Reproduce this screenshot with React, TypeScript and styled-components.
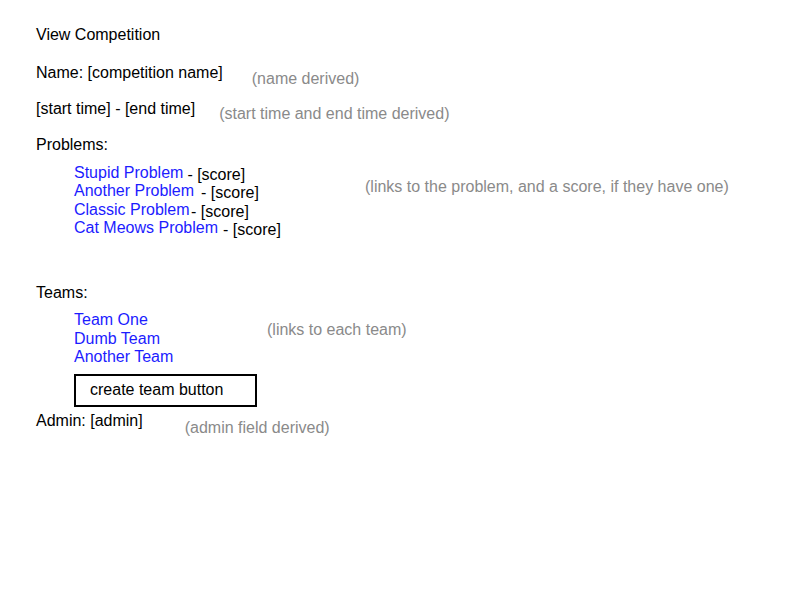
import styled, { createGlobalStyle } from "styled-components";

const problems = [
  { name: "Stupid Problem", gap: 4 },
  { name: "Another Problem", gap: 7 },
  { name: "Classic Problem", gap: 1.5 },
  { name: "Cat Meows Problem", gap: 5 },
];

const teams = ["Team One", "Dumb Team", "Another Team"];

export default function App() {
  return (
    <>
      <GlobalStyle />
      <Page>
        <Line>View Competition</Line>

        <Row $top={20}>
          <Line>Name: [competition name]</Line>
          <Note $left={29} $drop={6}>(name derived)</Note>
        </Row>

        <Row $top={18}>
          <Line>[start time] - [end time]</Line>
          <Note $left={24} $drop={5}>(start time and end time derived)</Note>
        </Row>

        <Row $top={18}>
          <Line>Problems:</Line>
        </Row>

        <Block $top={10}>
          <List $width={291}>
            {problems.map((p) => (
              <Item key={p.name} $step={18.33}>
                <Link href="#">{p.name}</Link>
                <Score $gap={p.gap}>- [score]</Score>
              </Item>
            ))}
          </List>
          <Note $left={0} $drop={14}>
            (links to the problem, and a score, if they have one)
          </Note>
        </Block>

        <Row $top={47}>
          <Line>Teams:</Line>
        </Row>

        <Block $top={9}>
          <List $width={193}>
            {teams.map((t) => (
              <Item key={t} $step={18.5}>
                <Link href="#">{t}</Link>
              </Item>
            ))}
          </List>
          <Note $left={0} $drop={10}>(links to each team)</Note>
        </Block>

        <Block $top={7}>
          <CreateButton>create team button</CreateButton>
        </Block>

        <Row $top={5}>
          <Line>Admin: [admin]</Line>
          <Note $left={42} $drop={7}>(admin field derived)</Note>
        </Row>
      </Page>
    </>
  );
}

const GlobalStyle = createGlobalStyle`
  html, body {
    margin: 0;
    padding: 0;
    background: #ffffff;
  }
  body {
    font-family: "Liberation Sans", Arial, sans-serif;
    color: #000000;
  }
`;

const Page = styled.div`
  width: 800px;
  height: 600px;
  box-sizing: border-box;
  padding: 26px 0 0 36px;
  display: flex;
  flex-direction: column;
  align-items: flex-start;
`;

const Line = styled.div`
  font-size: 16px;
  line-height: 18px;
  white-space: nowrap;
`;

const Row = styled.div<{ $top: number }>`
  display: flex;
  align-items: flex-start;
  height: 18px;
  margin-top: ${(p) => p.$top}px;
`;

const Note = styled.div<{ $left: number; $drop: number }>`
  font-size: 16px;
  line-height: 18px;
  color: #8a8a8a;
  white-space: nowrap;
  margin-left: ${(p) => p.$left}px;
  margin-top: ${(p) => p.$drop}px;
`;

const Block = styled.div<{ $top: number }>`
  display: flex;
  align-items: flex-start;
  margin: ${(p) => p.$top}px 0 0 38px;
`;

const List = styled.div<{ $width: number }>`
  width: ${(p) => p.$width}px;
  display: flex;
  flex-direction: column;
  font-size: 16px;
  line-height: 18px;
`;

const Item = styled.div<{ $step: number }>`
  display: flex;
  align-items: flex-start;
  height: ${(p) => p.$step}px;
  white-space: nowrap;
`;

const Link = styled.a`
  color: #1c1cff;
  text-decoration: none;
`;

const Score = styled.span<{ $gap: number }>`
  margin-left: ${(p) => p.$gap}px;
  padding-top: 2px;
  color: #000000;
`;

const CreateButton = styled.button`
  width: 183px;
  height: 33px;
  box-sizing: border-box;
  border: 2px solid #000000;
  background: #ffffff;
  padding: 0 0 0 14px;
  text-align: left;
  font-family: "Liberation Sans", Arial, sans-serif;
  font-size: 16px;
  color: #000000;
  cursor: pointer;
`;
